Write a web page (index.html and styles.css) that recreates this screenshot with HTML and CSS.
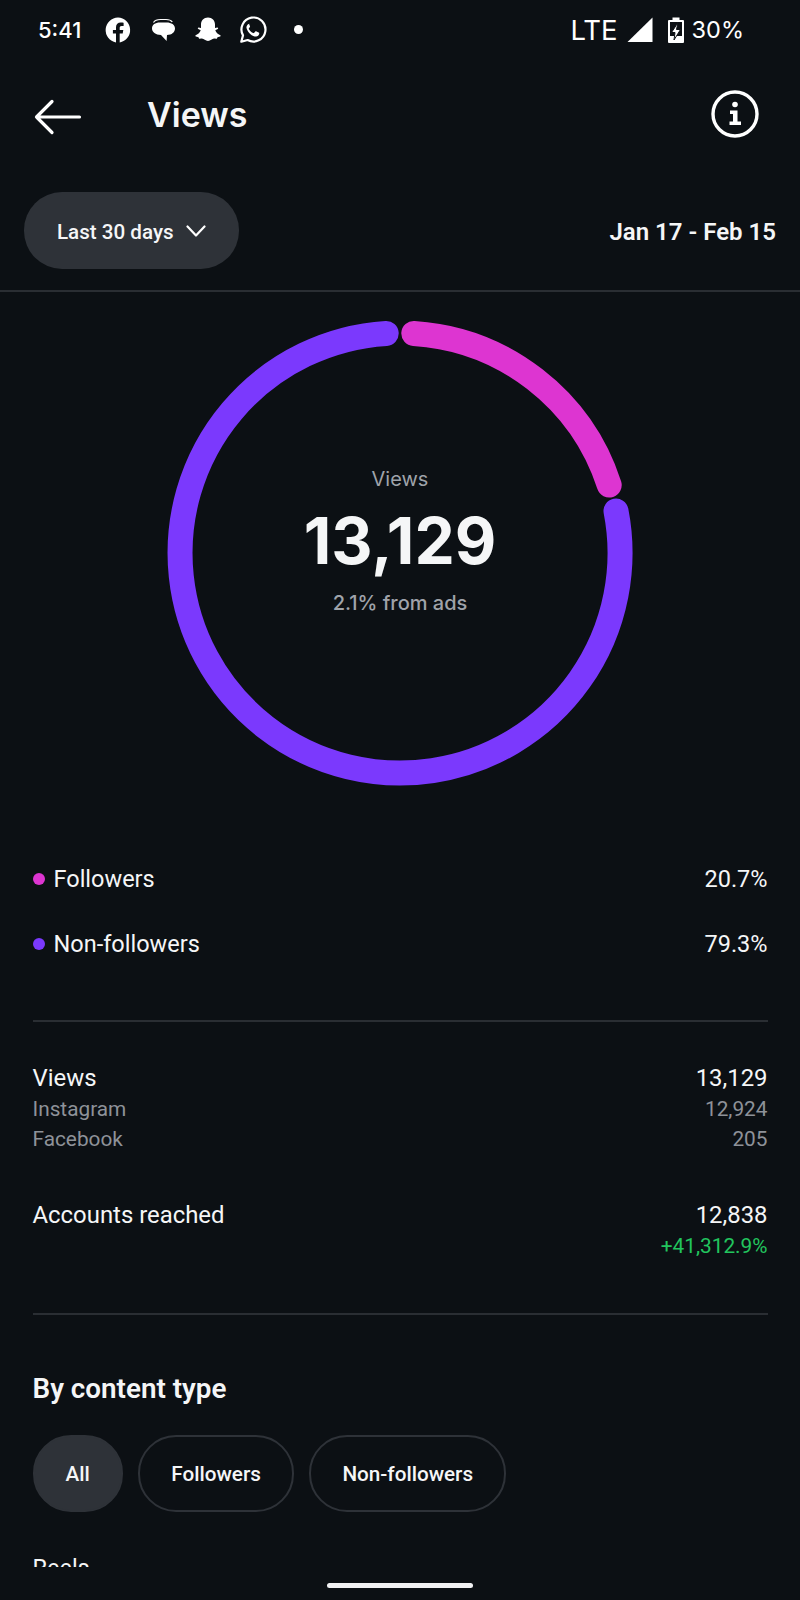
FILE: index.html
```html
<!DOCTYPE html>
<html lang="en">
<head>
  <meta charset="UTF-8" />
  <meta name="viewport" content="width=device-width, initial-scale=1.0"/>
  <title>Views</title>
  <link rel="stylesheet" href="styles.css">
</head>
<body>
  <div class="phone">
    <div class="status-bar">
      <div class="status-left">
        <span class="time">5:41</span>
        <svg class="note-icon" width="28" height="28" viewBox="0 0 28 28">
          <path fill="#fff" fill-rule="evenodd" d="M14 1.500a12.600 12.600 0 0 0-2 25v-8.900H8.900v-3.600H12v-2.700c0-3.100 1.900-4.900 4.700-4.900 1.400 0 2.600.2 2.900.3v3.200h-2c-1.500 0-1.900.9-1.900 1.900v2.200h3.600l-.6 3.600h-3v8.900A12.600 12.600 0 0 0 14 1.500z"/>
        </svg>
        <svg class="note-icon" width="28" height="28" viewBox="0 0 28 28">
          <path fill="none" stroke="#fff" stroke-width="1.200" d="M4.500 6.500c1.500-2.500 3.500-3 7-3h5.500c3 0 5 .6 6.300 2.300"/>
          <path fill="#fff" d="M11 6.500h6.500c5 0 8.500 2.200 8.500 6s-3.200 6.400-8 6.400l-.4 6.100-5.600-6C6.500 18.700 3 16.200 3 12.500s3-6 8-6z"/>
        </svg>
        <svg class="note-icon" width="28" height="28" viewBox="0 0 28 28">
          <path fill="#fff" d="M14 1.500c4.200 0 7 3 7 7v3.500l2.300-.6c.8 0 1.200.9.500 1.500l-2.500 1.400c.7 2.300 2.500 4 5 4.900.6.300.4 1-.2 1.300l-2.600.8-.6 1.500-2.800-.2c-2.200.2-3.500 2.400-6.100 2.400s-3.900-2.200-6.100-2.400l-2.800.2-.6-1.500-2.600-.8c-.6-.3-.8-1-.2-1.300 2.500-.9 4.300-2.600 5-4.900l-2.500-1.400c-.7-.6-.3-1.500.5-1.500l2.300.6V8.500c0-4 2.800-7 7-7z"/>
        </svg>
        <svg class="note-icon" width="28" height="28" viewBox="0 0 28 28">
          <path fill="none" stroke="#fff" stroke-width="2.200" stroke-linejoin="round" d="M2.300 25.700l1.700-6.300A12 12 0 1 1 8.600 24z"/>
          <path fill="#fff" d="M10.300 7.800c-.4 0-1 .2-1.500.7-.6.700-1.600 1.700-1.300 3.500.4 2.100 2.100 4.500 3.700 6 2 1.800 4.500 2.700 5.900 2.600 1.500-.2 2.900-1.300 3.100-2.500.1-.7 0-1.200-.1-1.300l-3-1.500c-.3-.1-.6-.1-.8.200l-1.300 1.500c-.2.200-.4.200-.7.100-1.800-.8-3.600-2.300-4.500-4.200-.1-.3 0-.5.200-.7l.9-1.200c.2-.2.200-.5.100-.8l-1.200-2.900c-.1-.3-.3-.5-.5-.5z"/>
        </svg>
        <span class="status-dot"></span>
      </div>
      <div class="status-right">
        <span class="lte">LTE</span>
        <svg class="signal" width="26" height="26" viewBox="0 0 26 26">
          <path fill="#fff" d="M25.500 .5v24.500H.5z"/>
        </svg>
        <svg class="battery" width="18" height="28" viewBox="0 0 18 28">
          <path fill="#fff" fill-rule="evenodd" d="M5.500 1.500h7v2.500h3.500a1 1 0 0 1 1 1v21a1 1 0 0 1-1 1H2a1 1 0 0 1-1-1V5a1 1 0 0 1 1-1h3.500zM3 6v14h12V6z"/>
          <path fill="#fff" stroke="#0c1014" stroke-width="1" d="M11 6.500L4.500 16.500h3.500l-1 7.500 6.500-10.500H9.500z"/>
        </svg>
        <span class="battery-text">30%</span>
      </div>
    </div>

    <div class="top-bar">
      <div class="top-bar-left">
        <svg class="back" width="48" height="36" viewBox="0 0 48 36">
          <path fill="none" stroke="#fff" stroke-width="3.200" stroke-linecap="round" stroke-linejoin="round" d="M45.500 18H2.500M18 2.500L2.500 18 18 33.500"/>
        </svg>
        <h1>Views</h1>
      </div>
      <svg class="info" width="48" height="48" viewBox="0 0 48 48">
        <circle cx="24" cy="24" r="22" fill="none" stroke="#fff" stroke-width="3.400"/>
        <circle cx="24" cy="14.500" r="2.800" fill="#fff"/>
        <path fill="#fff" d="M19 20.500h7.500v11H30V35H18.500v-3.500H22V24h-3z"/>
      </svg>
    </div>

    <div class="range-row">
      <div class="pill">
        <span>Last 30 days</span>
        <svg width="20" height="12" viewBox="0 0 20 12">
          <path fill="none" stroke="#fff" stroke-width="2.200" stroke-linecap="round" stroke-linejoin="round" d="M1.500 1.500L10 10.500l8.500-9"/>
        </svg>
      </div>
      <div class="date-range">Jan 17 - Feb 15</div>
    </div>

    <div class="scroll">
      <div class="donut">
        <svg width="466" height="466" viewBox="167 320 466 466">
          <path fill="none" stroke="#7b39fd" stroke-width="25" stroke-linecap="round" d="M616 511A220 220 0 1 1 386.200 333.400"/>
          <path fill="none" stroke="#dd35d1" stroke-width="25" stroke-linecap="round" d="M413.800 333.400A220 220 0 0 1 609.200 485"/>
        </svg>
        <div class="donut-center">
          <div class="donut-label">Views</div>
          <div class="donut-number">13,129</div>
          <div class="donut-sub">2.1% from ads</div>
        </div>
      </div>

      <div class="legend">
        <div class="row">
          <div class="legend-name"><span class="dot dot-pink"></span>Followers</div>
          <div>20.7%</div>
        </div>
        <div class="row">
          <div class="legend-name"><span class="dot dot-purple"></span>Non-followers</div>
          <div>79.3%</div>
        </div>
      </div>

      <div class="stats">
        <div class="stat-group">
          <div class="row"><div>Views</div><div>13,129</div></div>
          <div class="row sub"><div>Instagram</div><div>12,924</div></div>
          <div class="row sub"><div>Facebook</div><div>205</div></div>
        </div>
        <div class="stat-group">
          <div class="row"><div>Accounts reached</div><div>12,838</div></div>
          <div class="row sub green"><div></div><div>+41,312.9%</div></div>
        </div>
      </div>

      <div class="content-type">
        <h2>By content type</h2>
        <div class="chips">
          <div class="chip active">All</div>
          <div class="chip">Followers</div>
          <div class="chip">Non-followers</div>
        </div>
        <div class="reels">Reels</div>
      </div>
    </div>

    <div class="home-bar"></div>
  </div>
</body>
</html>
```

FILE: styles.css
```css
* {
  box-sizing: border-box;
}

body {
  margin: 0;
  background: #0c1014;
  color: #f5f6f7;
  font-family: Roboto, 'Liberation Sans', sans-serif;
}

.phone {
  width: 800px;
  height: 1600px;
  display: flex;
  flex-direction: column;
  overflow: hidden;
}

.status-bar {
  height: 58px;
  padding: 1px 56px 0 38px;
  display: flex;
  justify-content: space-between;
  align-items: center;
  color: #fff;
}

.status-left {
  display: flex;
  align-items: center;
  gap: 17px;
}

.time {
  font-family: Inter, sans-serif;
  font-size: 22px;
  font-weight: 500;
  width: 49px;
}

.status-dot {
  width: 9px;
  height: 9px;
  margin-left: 10px;
  border-radius: 50%;
  background: #fff;
}

.status-right {
  display: flex;
  align-items: center;
}

.lte,
.battery-text {
  font-family: Inter, sans-serif;
}

.lte {
  font-size: 27.500px;
}

.signal {
  margin-left: 9px;
}

.battery {
  margin-left: 14px;
}

.battery-text {
  margin-left: 7px;
  font-size: 23.500px;
}

.top-bar {
  height: 114px;
  padding: 0 41px 0 34px;
  display: flex;
  justify-content: space-between;
  align-items: center;
}

.top-bar-left {
  display: flex;
  align-items: center;
  gap: 65px;
}

.back {
  margin-top: 3px;
}

.info {
  margin-bottom: 2px;
}

h1 {
  margin: 0 0 2px;
  font-family: Inter, sans-serif;
  font-size: 34px;
  font-weight: 600;
}

.range-row {
  height: 120px;
  padding: 20px 24px 21px 24px;
  display: flex;
  justify-content: space-between;
  align-items: center;
  border-bottom: 2px solid #2a2e33;
}

.pill {
  height: 77px;
  width: 215px;
  padding-left: 33px;
  display: flex;
  align-items: center;
  gap: 12px;
  border-radius: 38px;
  background: #2e3238;
  font-size: 20.600px;
  font-weight: 500;
}

.pill span,
.date-range {
  padding-top: 2px;
}

.date-range {
  font-size: 24px;
  font-weight: 600;
}

.scroll {
  height: 1275px;
  overflow: hidden;
}

.donut {
  position: relative;
  margin-top: 28px;
  display: flex;
  justify-content: center;
}

.donut svg {
  display: block;
}

.donut-center {
  position: absolute;
  inset: 0;
  padding-bottom: 24px;
  display: flex;
  flex-direction: column;
  align-items: center;
  justify-content: center;
  font-family: Inter, sans-serif;
}

.donut-label {
  font-size: 20px;
  line-height: 24px;
  color: #9fa3aa;
}

.donut-number {
  margin: 10px 0;
  font-size: 64px;
  font-weight: 700;
  line-height: 80px;
}

.donut-sub {
  font-size: 20px;
  line-height: 24px;
  font-weight: 500;
  color: #9fa3aa;
}

.row {
  display: flex;
  justify-content: space-between;
  align-items: center;
}

.legend {
  margin: 80px 32.500px 0;
  padding-bottom: 63px;
  border-bottom: 2px solid #2a2e33;
  font-size: 23.500px;
  display: flex;
  flex-direction: column;
  gap: 39px;
  line-height: 26px;
}

.legend-name {
  display: flex;
  align-items: center;
  gap: 9px;
}

.dot {
  width: 12px;
  height: 12px;
  border-radius: 50%;
}

.dot-pink {
  background: #dd35d1;
}

.dot-purple {
  background: #7b39fd;
}

.stats {
  margin: 0 32.500px;
  padding: 41px 0 52px;
  border-bottom: 2px solid #2a2e33;
  font-size: 23.900px;
  line-height: 31px;
  display: flex;
  flex-direction: column;
  gap: 46px;
}

.sub {
  font-size: 20.800px;
  line-height: 30px;
  color: #8e9299;
}

.green {
  color: #22c55e;
}

.content-type {
  margin: 0 32.500px;
}

h2 {
  margin: 58px 0 30px;
  font-size: 27.800px;
  font-weight: 600;
  line-height: 32px;
}

.chips {
  display: flex;
  gap: 15.500px;
}

.chip {
  height: 77px;
  padding: 0 31px;
  display: flex;
  align-items: center;
  border: 2px solid #2e3238;
  border-radius: 38px;
  font-size: 20.700px;
  font-weight: 500;
}

.chip.active {
  background: #2e3238;
}

.reels {
  margin-top: 42px;
  font-size: 23.500px;
}

.home-bar {
  width: 146px;
  height: 5px;
  margin: 16px auto 0;
  border-radius: 3px;
  background: #f1f1f3;
}
```
